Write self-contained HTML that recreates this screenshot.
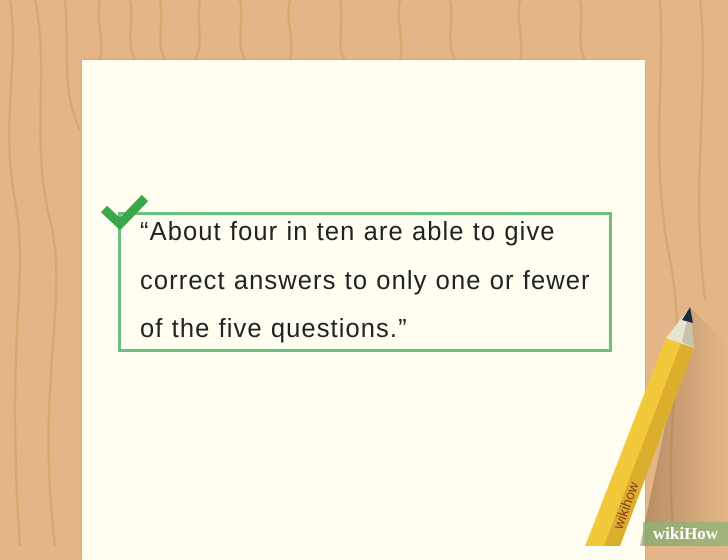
<!DOCTYPE html>
<html><head><meta charset="utf-8"><style>
body{margin:0;width:728px;height:546px;overflow:hidden;background:#e4b687;position:relative;font-family:"Liberation Sans",sans-serif}
.paper{position:absolute;left:82px;top:60px;width:563px;height:500px;background:#fffef1;box-shadow:0 0 2px rgba(0,0,0,.15)}
.box{position:absolute;left:118px;top:212px;width:488px;height:134px;border:3px solid #6cbf7e}
.t{position:absolute;left:140px;top:208px;font-size:25.5px;line-height:48.5px;color:#222;letter-spacing:1.1px;white-space:nowrap}
.wm{position:absolute;right:0;bottom:0;width:85px;height:24px;background:rgba(140,180,120,.75);color:#fff;font:bold 17px "Liberation Serif",serif;text-align:center;line-height:24px}
</style></head><body>
<svg width="728" height="546" style="position:absolute;left:0;top:0" fill="none" stroke="#dba770" stroke-width="2.5">
<path d="M10 0 C20 60 0 120 15 200 S5 330 20 546"/>
<path d="M35 0 C50 70 30 140 50 220 S35 380 55 546"/>
<path d="M65 0 C70 40 60 90 80 130"/>
<path d="M100 0 C95 20 105 40 100 60"/>
<path d="M130 0 C135 20 125 40 135 60"/>
<path d="M160 0 C165 25 155 40 165 60"/>
<path d="M200 0 C195 25 205 40 195 60"/>
<path d="M240 0 C245 20 235 40 245 60"/>
<path d="M290 0 C285 20 295 40 290 60"/>
<path d="M340 0 C345 25 335 45 345 60"/>
<path d="M400 0 C395 20 405 40 400 60"/>
<path d="M450 0 C455 20 445 40 455 60"/>
<path d="M520 0 C515 20 525 40 520 60"/>
<path d="M580 0 C585 20 575 40 585 60"/>
<path d="M660 0 C665 80 650 160 670 260 S660 420 675 546"/>
<path d="M700 0 C710 90 690 180 705 300"/>
</svg>
<div class="paper"></div>
<div class="box"></div>
<div class="t">“About four in ten are able to give<br>correct answers to only one or fewer<br>of the five questions.”</div>
<svg width="728" height="546" style="position:absolute;left:0;top:0">
<defs><linearGradient id="s" x1="0" y1="0" x2="1" y2="0"><stop offset="0" stop-color="rgba(90,60,30,.35)"/><stop offset="1" stop-color="rgba(90,60,30,0)"/></linearGradient></defs>
<path d="M104 209 L120 224 L145 198" stroke="#3aa84a" stroke-width="9" fill="none"/>
<polygon points="690,307 728,345 728,546 640,546" fill="url(#s)"/>
<polygon points="666,338 694,348 620,546 585,546" fill="#f3c93c"/>
<polygon points="681,343 694,348 620,546 604,546" fill="#dcae2e"/>
<polygon points="690,307 666,338 694,348" fill="#e8e4d2"/>
<polygon points="690,307 682,342 694,348" fill="#c8c2ae"/>
<polygon points="690,307 682,320 693,323" fill="#1c2a3a"/>
<text x="0" y="0" transform="translate(622,530) rotate(-70)" font-size="14" fill="#8a3a1a" font-family="Liberation Sans">wikihow</text>
</svg>
<div class="wm">wikiHow</div>
</body></html>
